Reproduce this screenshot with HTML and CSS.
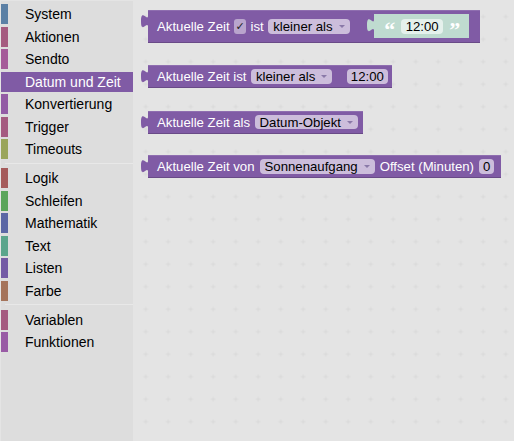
FILE: index.html
```html
<!DOCTYPE html>
<html lang="de">
<head>
<meta charset="utf-8">
<title>Blockly</title>
<link rel="stylesheet" href="styles.css">
</head>
<body>
<div class="app">
  <aside class="toolbox">
    <div class="cat c-system">System</div>
    <div class="cat c-aktionen">Aktionen</div>
    <div class="cat c-sendto">Sendto</div>
    <div class="cat c-datum sel">Datum und Zeit</div>
    <div class="cat c-konv">Konvertierung</div>
    <div class="cat c-trigger">Trigger</div>
    <div class="cat c-timeouts">Timeouts</div>
    <div class="sep"></div>
    <div class="cat c-logik">Logik</div>
    <div class="cat c-schleifen">Schleifen</div>
    <div class="cat c-mathe">Mathematik</div>
    <div class="cat c-text">Text</div>
    <div class="cat c-listen">Listen</div>
    <div class="cat c-farbe">Farbe</div>
    <div class="sep"></div>
    <div class="cat c-variablen">Variablen</div>
    <div class="cat c-funktionen">Funktionen</div>
  </aside>
  <main class="workspace">
    <svg class="grid" width="381" height="441">
      <defs>
        <pattern id="g" x="12.7" y="16.7" width="22.5" height="22.5" patternUnits="userSpaceOnUse">
          <path d="M-2.5 0H2.5M0 -2.5V2.5M20 0H25M22.5 -2.5V2.5M-2.5 22.5H2.5M0 20V25M20 22.5H25M22.5 20V25" stroke="#d9d9d9" stroke-width="1"/>
        </pattern>
      </defs>
      <rect width="381" height="441" fill="url(#g)"/>
    </svg>

    <div class="block b1 tall">
      <svg class="tab" viewBox="0 0 8 20"><path d="M8 5C8 15 0 -3 0 12.5S8 10 8 20Z"/></svg>
      <span class="lbl">Aktuelle Zeit</span>
      <span class="check">✓</span>
      <span class="lbl">ist</span>
      <span class="dd">kleiner als<i class="arrow"></i></span>
      <div class="block shadow">
        <svg class="tab" viewBox="0 0 8 20"><path d="M8 5C8 15 0 -3 0 12.5S8 10 8 20Z"/></svg>
        <span class="quote">“</span>
        <span class="field">12:00</span>
        <span class="quote">”</span>
      </div>
    </div>

    <div class="block b2">
      <svg class="tab" viewBox="0 0 8 20"><path d="M8 5C8 15 0 -3 0 12.5S8 10 8 20Z"/></svg>
      <span class="lbl">Aktuelle Zeit ist</span>
      <span class="dd">kleiner als<i class="arrow"></i></span>
      <span class="field wide-gap">12:00</span>
    </div>

    <div class="block b3">
      <svg class="tab" viewBox="0 0 8 20"><path d="M8 5C8 15 0 -3 0 12.5S8 10 8 20Z"/></svg>
      <span class="lbl">Aktuelle Zeit als</span>
      <span class="dd">Datum-Objekt<i class="arrow"></i></span>
    </div>

    <div class="block b4">
      <svg class="tab" viewBox="0 0 8 20"><path d="M8 5C8 15 0 -3 0 12.5S8 10 8 20Z"/></svg>
      <span class="lbl">Aktuelle Zeit von</span>
      <span class="dd">Sonnenaufgang<i class="arrow"></i></span>
      <span class="lbl">Offset (Minuten)</span>
      <span class="field">0</span>
    </div>
  </main>
</div>
</body>
</html>
```
FILE: styles.css
```css
* { box-sizing: border-box; }

body {
  margin: 0;
  width: 514px;
  height: 441px;
  overflow: hidden;
  background: #e4e4e4;
  font-family: "Liberation Sans", Arial, sans-serif;
}

.app {
  display: flex;
  height: 441px;
}

/* Toolbox */
.toolbox {
  width: 132px;
  flex: none;
  margin: 1px 0 0 1px;
  padding-top: 3px;
  background: #dddddd;
}

.cat {
  display: flex;
  align-items: center;
  height: 20px;
  margin-bottom: 2.5px;
  font-size: 14px;
  color: #000;
  white-space: nowrap;
}

.cat::before {
  content: "";
  flex: none;
  width: 7px;
  height: 20px;
  margin-right: 17px;
  background: var(--c);
}

.cat.sel {
  background: #805ba5;
  color: #fff;
}

.sep {
  height: 1px;
  margin: 3.5px 0 4.5px 4px;
  background: #e8e8e8;
}

.c-system { --c: #5b80a5; }
.c-aktionen { --c: #a55b80; }
.c-sendto { --c: #a55b99; }
.c-datum { --c: #805ba5; }
.c-konv { --c: #935ba5; }
.c-trigger { --c: #a55b80; }
.c-timeouts { --c: #9aa55b; }
.c-logik { --c: #a55b5b; }
.c-schleifen { --c: #5ba55b; }
.c-mathe { --c: #5b67a5; }
.c-text { --c: #5ba58c; }
.c-listen { --c: #745ba5; }
.c-farbe { --c: #a5745b; }
.c-variablen { --c: #a55b80; }
.c-funktionen { --c: #995ba5; }

/* Workspace */
.workspace {
  position: relative;
  flex: 1;
  height: 441px;
}

.grid {
  position: absolute;
  left: 0;
  top: 0;
}

.block {
  position: absolute;
  left: 15px;
  display: flex;
  align-items: center;
  gap: 4.5px;
  height: 23px;
  padding: 0 5px 0 9px;
  background: #805ba5;
  color: #fff;
  font-size: 13.2px;
  white-space: nowrap;
  box-shadow: inset 0 1px 0 rgba(255,255,255,0.12), inset 0 -1px 0 rgba(0,0,0,0.18);
}

.block .tab {
  position: absolute;
  left: -7.2px;
  top: 0;
  width: 7.2px;
  height: 18px;
  fill: #805ba5;
}

.b1 { top: 10px; height: 32.5px; padding-right: 11px; }
.b2 { top: 65px; padding-right: 4px; }
.b3 { top: 110.5px; }
.b4 { top: 155px; gap: 5px; padding-right: 7px; }

.check {
  width: 12px;
  height: 15px;
  border-radius: 3px;
  background: rgba(255,255,255,0.45);
  color: #222;
  font-family: "DejaVu Sans", sans-serif;
  font-size: 11px;
  line-height: 15px;
  text-align: center;
}

.dd {
  display: flex;
  align-items: center;
  height: 14.5px;
  padding: 0 5px;
  border-radius: 4px;
  background: rgba(255,255,255,0.6);
  color: #000;
}

.arrow {
  width: 0;
  height: 0;
  margin-left: 6px;
  border-left: 3px solid transparent;
  border-right: 3px solid transparent;
  border-top: 3.5px solid #8a79a8;
}

.field {
  display: flex;
  align-items: center;
  height: 14.5px;
  padding: 0 4px;
  border-radius: 4px;
  background: rgba(255,255,255,0.6);
  color: #000;
}

.wide-gap { margin-left: 10px; }

.block.shadow {
  position: relative;
  left: auto;
  height: 24px;
  margin-left: 20px;
  padding: 0 9px 0 10px;
  gap: 6px;
  background: #bfdbd0;
  box-shadow: none;
}

.block.shadow .tab {
  fill: #bfdbd0;
  top: 0;
}

.block.shadow .field {
  padding: 0 4.5px;
}

.quote {
  position: relative;
  top: 4px;
  color: #fff;
  font-family: "Liberation Serif", serif;
  font-weight: bold;
  font-size: 22px;
  line-height: 16px;
  height: 16px;
}
```
